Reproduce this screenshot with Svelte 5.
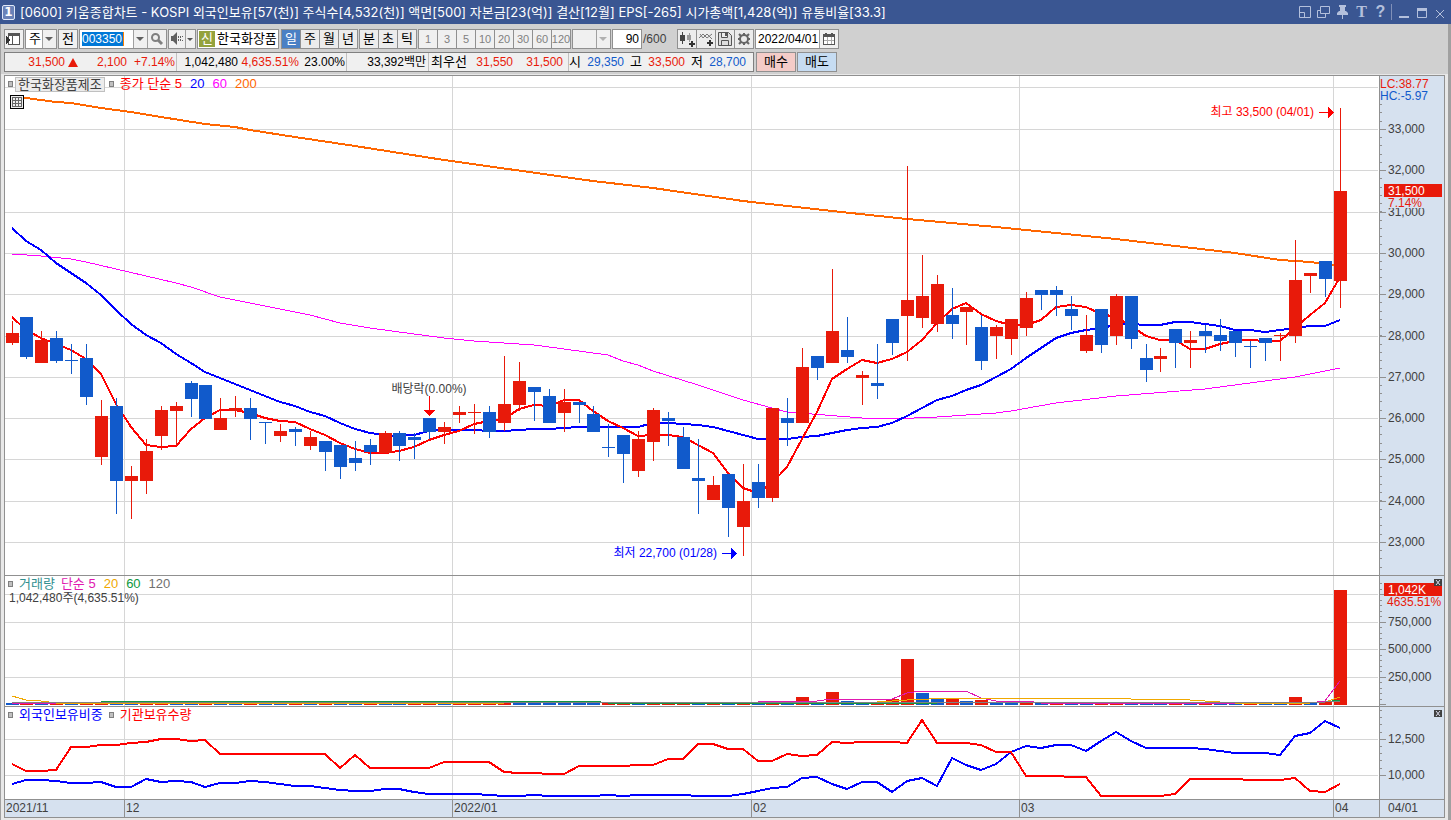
<script lang="ts">
  type Candle = [tone: 'r' | 'b', high: number, top: number, bottom: number, low: number];
  type Point = [index: number, y: number];

  // all panels share one vertical scale, each svg shows its own slice of it
  const candles: Candle[] = [
    ['r', 321, 333, 343, 345], ['b', 317, 317, 357, 359], ['r', 331, 340, 363, 363], ['b', 331, 338, 361, 363],
    ['b', 344, 360, 361, 374], ['b', 344, 358, 397, 405], ['r', 400, 416, 457, 465], ['b', 398, 406, 481, 514],
    ['r', 466, 476, 481, 519], ['r', 439, 451, 481, 494], ['r', 406, 410, 436, 450], ['r', 402, 406, 411, 446],
    ['b', 381, 383, 399, 417], ['b', 385, 385, 419, 419], ['r', 398, 418, 430, 430], ['r', 396, 408, 411, 417],
    ['b', 398, 408, 419, 440], ['b', 422, 422, 423, 444], ['r', 424, 431, 436, 442], ['b', 427, 429, 432, 446],
    ['r', 431, 437, 446, 450], ['b', 441, 441, 452, 471], ['b', 445, 445, 467, 479], ['b', 441, 458, 463, 471],
    ['b', 439, 445, 452, 465], ['r', 431, 433, 453, 453], ['b', 431, 433, 446, 461], ['b', 433, 437, 440, 459],
    ['b', 418, 418, 432, 439], ['r', 422, 427, 432, 444], ['r', 406, 412, 415, 423], ['r', 404, 412, 413, 434],
    ['b', 406, 412, 432, 438], ['r', 356, 404, 423, 431], ['r', 362, 381, 405, 411], ['b', 387, 387, 392, 421],
    ['b', 389, 396, 423, 423], ['r', 389, 402, 413, 432], ['b', 402, 402, 405, 423], ['b', 406, 414, 432, 432],
    ['b', 424, 447, 448, 457], ['b', 435, 435, 454, 483], ['r', 431, 439, 471, 477], ['r', 408, 410, 442, 461],
    ['b', 412, 418, 421, 446], ['b', 427, 437, 469, 469], ['b', 439, 478, 481, 514], ['r', 476, 485, 500, 500],
    ['b', 474, 474, 508, 537], ['r', 464, 501, 527, 556], ['b', 464, 482, 498, 508], ['r', 408, 408, 498, 502],
    ['b', 398, 418, 423, 446], ['r', 348, 367, 423, 423], ['b', 356, 356, 368, 380], ['r', 269, 331, 363, 363],
    ['b', 317, 350, 357, 363], ['r', 371, 375, 378, 405], ['b', 344, 383, 386, 399], ['b', 319, 319, 343, 355],
    ['r', 166, 300, 316, 361], ['r', 255, 296, 318, 328], ['r', 275, 284, 324, 332], ['b', 288, 315, 324, 339],
    ['r', 307, 307, 312, 345], ['b', 315, 327, 361, 370], ['r', 325, 327, 336, 359], ['r', 319, 319, 339, 355],
    ['r', 292, 298, 328, 336], ['b', 290, 290, 295, 310], ['b', 286, 290, 295, 316], ['b', 296, 309, 316, 330],
    ['r', 315, 335, 351, 353], ['b', 309, 309, 345, 353], ['r', 294, 296, 336, 345], ['b', 296, 296, 339, 349],
    ['b', 344, 358, 370, 382], ['r', 348, 356, 359, 372], ['b', 329, 329, 343, 368], ['r', 331, 340, 343, 368],
    ['b', 325, 331, 336, 353], ['b', 319, 335, 341, 351], ['b', 331, 331, 343, 357], ['b', 341, 346, 347, 368],
    ['b', 338, 338, 343, 361], ['r', 333, 335, 336, 361], ['r', 240, 280, 336, 343], ['r', 273, 273, 276, 293],
    ['b', 261, 261, 279, 297], ['r', 108, 191, 281, 308]
  ];

  const ma5 = [
    317, 330, 338, 344, 350, 359, 374, 404, 427, 445, 447, 446, 429, 418, 410, 410, 413, 418, 421, 422,
    429, 435, 443, 449, 453, 453, 451, 447, 440, 435, 431, 424, 421, 419, 409, 405, 406, 400, 400, 411,
    421, 428, 436, 435, 435, 437, 445, 453, 473, 488, 493, 483, 467, 439, 412, 379, 369, 360, 363, 359,
    352, 340, 323, 309, 303, 314, 321, 325, 325, 320, 307, 305, 307, 314, 317, 326, 336, 340, 340, 349,
    349, 344, 341, 340, 341, 341, 328, 315, 303, 277
  ];
  const ma20 = [
    228, 241, 250, 263, 273, 283, 295, 310, 324, 335, 343, 354, 363, 372, 378, 384, 390, 396, 402, 406,
    412, 416, 423, 429, 433, 435, 436, 435, 431, 430, 430, 430, 431, 431, 430, 429, 429, 428, 427, 427,
    427, 427, 427, 423, 423, 424, 425, 427, 431, 435, 439, 439, 439, 437, 436, 433, 430, 428, 427, 423,
    416, 408, 400, 396, 390, 385, 377, 369, 358, 348, 338, 333, 330, 328, 325, 324, 325, 325, 322, 322,
    324, 326, 330, 330, 332, 330, 328, 326, 326, 320
  ];
  const ma60: Point[] = [
    [0, 254], [2, 256], [4, 259], [5, 262], [7, 269], [9, 276], [11, 283], [12, 287], [14, 297], [18, 309],
    [20, 315], [22, 323], [24, 328], [26, 332], [29, 338], [31, 341], [35, 345], [37, 349], [40, 355], [41, 361],
    [42, 365], [43, 371], [46, 385], [49, 400], [51, 408], [52, 412], [57, 418], [59, 419], [62, 417], [66, 413],
    [67, 411], [70, 403], [74, 396], [80, 389], [86, 377], [89, 368]
  ];
  const ma200: Point[] = [
    [0, 97], [1, 98], [3, 102], [4, 103], [6, 108], [8, 112], [10, 117], [13, 124], [15, 127], [16, 130],
    [19, 137], [23, 146], [29, 160], [39, 181], [43, 188], [49, 201], [55, 211], [60, 219], [66, 227],
    [74, 239], [82, 253], [85, 260], [87, 262], [89, 266]
  ];

  const volumeTones =
    'brbrbrrbbrrbbrbbrbbrbrbbrbbrrbrrrrbbbbbbrrbrrrbrbrbrbrbrbbrrrbbrbrbbrbrbbrrbbbrbrbbrbbrbrr';
  const volumeTops: Record<number, number> = {
    1: 702, 7: 702, 8: 702, 51: 701, 53: 697, 55: 692, 56: 701, 59: 699, 60: 659, 61: 693, 62: 698,
    63: 698, 64: 701, 65: 700, 66: 702, 67: 702, 68: 702, 86: 697, 88: 702, 89: 590
  };
  const volumeLines: { name: string; points: Point[] }[] = [
    { name: 'vol5', points: [[0, 703], [6, 703], [7, 702], [50, 702], [52, 701], [54, 701], [55, 699], [57, 699], [58, 700], [59, 699], [60, 693], [61, 691], [64, 691], [65, 698], [66, 701], [68, 701], [69, 703], [87, 703], [88, 701], [89, 681]] },
    { name: 'vol20', points: [[0, 696], [1, 700], [2, 701], [3, 703], [33, 703], [34, 702], [58, 702], [60, 700], [63, 698], [74, 698], [75, 699], [78, 699], [80, 701], [82, 703], [87, 703], [88, 702], [89, 697]] },
    { name: 'vol60', points: [[6, 702], [7, 701], [39, 701], [40, 703], [62, 703], [63, 702], [88, 702], [89, 700]] },
    { name: 'vol120', points: [[0, 702], [88, 702], [89, 701]] }
  ];

  const institution = [
    764, 771, 771, 770, 747, 747, 745, 745, 743, 742, 739, 739, 741, 740, 754, 754, 754, 754, 754, 754,
    754, 754, 768, 755, 768, 768, 768, 768, 768, 762, 762, 762, 762, 772, 773, 773, 774, 774, 766, 766,
    766, 766, 765, 765, 759, 759, 744, 744, 749, 749, 761, 761, 754, 756, 755, 742, 743, 742, 742, 742,
    743, 720, 743, 743, 743, 745, 752, 752, 776, 776, 776, 777, 777, 796, 796, 796, 796, 796, 794, 779,
    779, 779, 779, 780, 780, 780, 778, 791, 792, 784
  ];
  const foreign = [
    784, 780, 780, 781, 783, 783, 782, 787, 787, 779, 782, 781, 782, 787, 783, 783, 781, 782, 784, 786,
    786, 788, 790, 791, 791, 789, 789, 792, 794, 794, 794, 794, 795, 796, 796, 795, 796, 796, 796, 796,
    795, 796, 795, 795, 795, 795, 796, 796, 796, 794, 791, 788, 787, 778, 777, 784, 789, 782, 782, 792,
    781, 778, 786, 758, 765, 770, 764, 752, 746, 748, 745, 745, 751, 741, 732, 741, 748, 748, 748, 748,
    749, 751, 753, 753, 753, 755, 736, 733, 721, 728
  ];

  const months = [
    { index: 8, label: '12' },
    { index: 30, label: '2022/01' },
    { index: 50, label: '02' },
    { index: 68, label: '03' },
    { index: 89, label: '04' }
  ];

  const priceTicks = Array.from({ length: 11 }, (_, k) => ({
    y: Math.round(129 + 41.3 * k),
    label: `${33 - k},000`
  }));
  const priceMinor = Array.from({ length: 57 }, (_, k) => Math.round(104 + 8.26 * k));
  const volumeTicks = [
    { y: 594, label: '' },
    { y: 622, label: '750,000' },
    { y: 649, label: '500,000' },
    { y: 677, label: '250,000' },
    { y: 704, label: '' }
  ];
  const volumeMinor = Array.from({ length: 23 }, (_, k) => Math.round(583 + 5.5 * k));
  const holdTicks = [
    { y: 739, label: '12,500' },
    { y: 775, label: '10,000' }
  ];
  const holdMinor = Array.from({ length: 9 }, (_, k) => Math.round(710 + 7.2 * k));

  const periods = ['일', '주', '월', '년'];
  const units = ['분', '초', '틱'];
  const intervals = ['1', '3', '5', '10', '20', '30', '60', '120'];

  let plotWidth = $state(1374);
  let period = $state('일');
  let count = $state('90');
  let date = $state('2022/04/01');
  let code = $state('003350');

  const step = $derived((plotWidth - 46) / (candles.length - 1));
  const xs = $derived(candles.map((_, i) => Math.floor(7.01 + step * i)));

  function line(points: Point[]) {
    return points.map(([i, y]) => `${xs[i]},${y}`).join(' ');
  }

  function dense(values: number[]) {
    return line(values.map((y, i): Point => [i, y]));
  }
</script>

{#snippet arrow()}
  <svg class="arrow" width="14" height="18" viewBox="0 0 14 18" aria-hidden="true">
    <path d="M0 0h1v18H0z" fill="#a0a0a0" />
    <path d="M3 7h8L7 11z" fill="currentColor" />
  </svg>
{/snippet}

{#snippet grid(lines: number[], top: number, height: number)}
  {#each lines as y}
    <rect x="0" {y} width={plotWidth - 1} height="1" class="grid" />
  {/each}
  {#each months as month}
    <rect x={xs[month.index] - 7} y={top} width="1" {height} class="grid" />
  {/each}
{/snippet}

{#snippet ticks(major: { y: number; label: string }[], minor: number[])}
  {#each minor as y}
    <rect x="0" {y} width="2" height="1" class="tick" />
  {/each}
  {#each major as tick}
    <rect x="0" y={tick.y} width="6" height="1" class="tick" />
    <text x="8" y={tick.y + 4}>{tick.label}</text>
  {/each}
{/snippet}

{#snippet close()}
  <button class="close" aria-label="닫기">
    <svg width="8" height="7" viewBox="0 0 8 7" aria-hidden="true">
      <path d="M2 1l4 5M6 1L2 6" stroke="#dde" fill="none" />
    </svg>
  </button>
{/snippet}

<header class="title">
  <span class="title__badge">1</span>
  <h1>[0600] 키움종합차트 - KOSPI 외국인보유[57(천)] 주식수[4,532(천)] 액면[500] 자본금[23(억)] 결산[12월] EPS[-265] 시가총액[1,428(억)] 유통비율[33.3]</h1>
  <div class="title__tools">
    <button aria-label="화면 축소">
      <svg width="12" height="12" viewBox="0 0 12 12"><path d="M.5 .5h11v11H.5zM.5 6.5h5v5" /></svg>
    </button>
    <button aria-label="창 복제">
      <svg width="13" height="12" viewBox="0 0 13 12"><path d="M3.500 .5h9v7h-9zM3 4.500H.5v7h8V8" /></svg>
    </button>
    <button aria-label="고정">
      <svg width="11" height="14" viewBox="0 0 11 14"><path class="solid" d="M2 0h7v2H8v4h1l2 2v2H6v4H5v-4H0V8l2-2h1V2H2z" /></svg>
    </button>
    <button class="glyph">T</button>
    <button class="glyph glyph--sans">?</button>
  </div>
  <div class="title__tools title__tools--window">
    <button aria-label="최소화">
      <svg width="10" height="12" viewBox="0 0 10 12"><path class="solid" d="M0 10h10v2H0z" /></svg>
    </button>
    <button aria-label="최대화">
      <svg width="10" height="12" viewBox="0 0 10 12"><path d="M.5 2.500h9v9h-9z" /><path class="solid" d="M0 2h10v3H0z" /></svg>
    </button>
    <button aria-label="창 닫기">
      <svg width="8" height="12" viewBox="0 0 8 12"><path d="M0 4l8 8M8 4l-8 8" /></svg>
    </button>
  </div>
</header>

<main class="window">
  <div class="toolbar">
    <div class="row">
      <button class="box icon" aria-label="패널 열기">
        <svg width="16" height="14" viewBox="0 0 16 14" shape-rendering="crispEdges">
          <path d="M2.500 1.500h11v11h-11z" fill="#fff" stroke="#555" />
          <path d="M6.500 4v9" stroke="#555" />
          <path d="M2 1h12v3H2z" fill="#555" />
          <path d="M0 4l5 4-5 4z" fill="#333" />
        </svg>
      </button>
      <div class="box select select--market">
        <select aria-label="종목 구분"><option>주</option></select>
        {@render arrow()}
      </div>
      <button class="box prev">전</button>
      <div class="box code">
        <input bind:value={code} aria-label="종목코드" />
        <button class="bare" aria-label="종목 목록">{@render arrow()}</button>
        <button class="icon icon--split" aria-label="종목 검색">
          <svg width="12" height="12" viewBox="0 0 12 12" fill="none" stroke="#808080">
            <circle cx="4.500" cy="4.500" r="3.500" stroke-width="2" /><path d="M7 7l4 4" stroke-width="3" />
          </svg>
        </button>
      </div>
      <div class="box sound">
        <button class="icon" aria-label="소리">
          <svg width="14" height="14" viewBox="0 0 14 14" fill="#606060">
            <path d="M1 4h2l4-4v13L3 9H1z" /><path d="M8 4h1v2H8zM10 4h1v2h-1zM8 7h1v2H8zM10 7h1v2h-1zM12 4h1v1h-1zM12 8h1v1h-1z" />
          </svg>
        </button>
        <button class="bare bare--small" aria-label="소리 설정">
          <svg width="10" height="18" viewBox="0 0 10 18"><path d="M0 0h1v18H0z" fill="#a0a0a0" /><path d="M2 8h6L5 11z" fill="#555" /></svg>
        </button>
      </div>
      <div class="box stock"><span class="stock__badge">신</span><span class="stock__name">한국화장품</span></div>
      <div class="segment segment--first">
        {#each periods as item}
          <button class:active={period === item} onclick={() => (period = item)}>{item}</button>
        {/each}
      </div>
      <div class="segment">
        {#each units as item}
          <button>{item}</button>
        {/each}
      </div>
      <div class="segment segment--muted">
        {#each intervals as item}
          <button disabled>{item}</button>
        {/each}
      </div>
      <div class="box select select--empty">
        <select aria-label="간격" disabled><option></option></select>
        {@render arrow()}
      </div>
      <label class="count"><input class="box" bind:value={count} /><span>/600</span></label>
      <div class="segment segment--icons">
        <button aria-label="차트 추가">
          <svg width="16" height="15" viewBox="0 0 16 15" shape-rendering="crispEdges">
            <path d="M1 3h5v6H1zM3 0h1v12H3z" fill="#444" /><path d="M8 3h4v5H8zM10 1h1v9h-1z" fill="#999" />
            <path d="M12 9h2v2h2v2h-2v2h-2v-2h-2v-2h2z" fill="#333" />
          </svg>
        </button>
        <button aria-label="지표 추가">
          <svg width="16" height="15" viewBox="0 0 16 15">
            <path d="M1 6l4-4 4 4 5-4M2 2l3 4 4-4 5 5" fill="none" stroke="#777" />
            <path d="M11 8h2v2h2v2h-2v2h-2v-2H9v-2h2z" fill="#333" />
          </svg>
        </button>
        <button aria-label="저장">
          <svg width="14" height="14" viewBox="0 0 14 14" fill="#ddd" stroke="#555">
            <path d="M.5 .5h10l3 3v10H.5zM3.500 .5v5h6v-5M3.500 13.500v-5h7v5" /><path d="M8 1v3" stroke-width="2" />
          </svg>
        </button>
        <button aria-label="설정">
          <svg width="14" height="14" viewBox="0 0 14 14" fill="none" stroke="#666">
            <circle cx="7" cy="7" r="4" stroke-width="2" />
            <path d="M7 1v2M7 11v2M1 7h2M11 7h2M2 2l2 2M10 10l2 2M12 2l-2 2M4 10l-2 2" stroke-width="2" />
          </svg>
        </button>
      </div>
      <div class="box date">
        <input bind:value={date} aria-label="기준일" />
        <button class="icon icon--split" aria-label="달력">
          <svg width="12" height="12" viewBox="0 0 12 12" shape-rendering="crispEdges">
            <path d="M0 1h12v11H0z" fill="#555" /><path d="M1 4h10v7H1z" fill="#fff" />
            <path d="M4 4v7M8 4v7M1 7.500h10" stroke="#aaa" /><path d="M2 0h2v2H2zM8 0h2v2H8z" fill="#555" />
          </svg>
        </button>
      </div>
    </div>

    <div class="row">
      <div class="quote">
        <div class="quote__cell quote__cell--change">
          <span class="up">31,500</span><span class="triangle"></span><span class="up">2,100</span><span class="up">+7.14%</span>
        </div>
        <div class="quote__cell quote__cell--volume">
          <span>1,042,480</span><span class="up">4,635.51%</span><span>23.00%</span>
        </div>
        <div class="quote__cell quote__cell--amount"><span>33,392백만</span></div>
        <div class="quote__cell quote__cell--best">
          <span class="name">최우선</span><span class="up">31,550</span><span class="up">31,500</span>
        </div>
        <div class="quote__cell quote__cell--range">
          <span class="name">시</span><span class="down">29,350</span>
          <span class="name">고</span><span class="up">33,500</span>
          <span class="name">저</span><span class="down">28,700</span>
        </div>
      </div>
      <button class="trade trade--buy">매수</button>
      <button class="trade trade--sell">매도</button>
    </div>
  </div>

  <div class="chart">
    <section class="panel">
      <div class="plot" bind:clientWidth={plotWidth}>
        <svg width="100%" height="499" viewBox="0 76 {plotWidth} 499" shape-rendering="crispEdges">
          {@render grid([87, ...priceTicks.map((t) => t.y)], 76, 499)}
          <polyline class="line ma200" points={line(ma200)} />
          <polyline class="line ma60" points={line(ma60)} />
          <polyline class="line ma20" points={dense(ma20)} />
          <polyline class="line ma5" points={dense(ma5)} />
          {#each candles as [tone, high, top, bottom, low], i}
            <g class={tone}>
              <rect x={xs[i]} y={high} width="1" height={low - high} />
              <rect x={xs[i] - 6} y={top} width="13" height={bottom - top} />
            </g>
          {/each}
          <g class="note note--high">
            <text x={xs[89] - 26} y="116" text-anchor="end">최고 33,500 (04/01)</text>
            <path d="M{xs[89] - 21} 112h9v-5l6 5.500-6 5.500v-5h-9z" />
          </g>
          <g class="note note--low">
            <text x={xs[49] - 26} y="557" text-anchor="end">최저 22,700 (01/28)</text>
            <path d="M{xs[49] - 21} 553h9v-5l6 5.500-6 5.500v-5h-9z" />
          </g>
          <g class="note note--event">
            <text x={xs[28]} y="393" text-anchor="middle">배당락(0.00%)</text>
            <path d="M{xs[28]} 396h1v14h5l-5.500 6-5.500-6h5z" />
          </g>
        </svg>
        <div class="legend">
          <i class="handle"></i><button class="legend__name">한국화장품제조</button><i class="handle"></i>
          <span class="legend__main c-red">종가 단순 5</span><span class="c-blue">20</span><span class="c-pink">60</span><span class="c-orange">200</span>
        </div>
        <button class="sheet" aria-label="데이터 표">
          <svg width="14" height="14" viewBox="0 0 14 14" shape-rendering="crispEdges">
            <path d="M.5 .5h13v13H.5z" fill="#eee" stroke="#000" />
            <path d="M2.500 2.500h9v9h-9zM2 5.500h10M2 8.500h10M5.500 2v10M8.500 2v10" fill="none" stroke="#666" />
          </svg>
        </button>
      </div>
      <div class="axis">
        <svg width="64" height="499" viewBox="0 76 64 499" shape-rendering="crispEdges">
          {@render ticks(priceTicks, priceMinor)}
          <text x="0" y="88" class="r">LC:38.77</text>
          <text x="0" y="100" class="b">HC:-5.97</text>
          <rect x="4" y="184" width="58" height="13" class="r" />
          <text x="8" y="195" class="badge">31,500</text>
          <rect x="7" y="197" width="50" height="11" class="axis-fill" />
          <text x="8" y="207" class="r">7.14%</text>
        </svg>
      </div>
    </section>

    <section class="panel">
      <div class="plot">
        <svg width="100%" height="130" viewBox="0 576 {plotWidth} 130" shape-rendering="crispEdges">
          {@render grid([594, 622, 649, 677], 576, 130)}
          {#each volumeTones as tone, i}
            {@const top = volumeTops[i] ?? 703}
            <rect x={xs[i] - 6} y={top} width="13" height={705 - top} class={tone} />
          {/each}
          {#each volumeLines as item}
            <polyline class={`line ${item.name}`} points={line(item.points)} />
          {/each}
        </svg>
        <div class="legend">
          <i class="handle"></i><span class="legend__item c-teal">거래량</span><span class="c-magenta">단순 5</span><span class="c-yellow">20</span><span class="c-green">60</span><span class="c-gray">120</span>
        </div>
        <p class="volume">1,042,480주(4,635.51%)</p>
      </div>
      <div class="axis">
        <svg width="64" height="130" viewBox="0 576 64 130" shape-rendering="crispEdges">
          {@render ticks(volumeTicks, volumeMinor)}
          <rect x="4" y="583" width="58" height="13" class="r" />
          <text x="8" y="594" class="badge">1,042K</text>
          <text x="7" y="606" class="r">4635.51%</text>
        </svg>
        {@render close()}
      </div>
    </section>

    <section class="panel">
      <div class="plot">
        <svg width="100%" height="92" viewBox="0 707 {plotWidth} 92" shape-rendering="crispEdges">
          {@render grid([739, 775], 707, 92)}
          <polyline class="line ma20" points={dense(foreign)} />
          <polyline class="line ma5" points={dense(institution)} />
        </svg>
        <div class="legend">
          <i class="handle"></i><span class="legend__item c-blue">외국인보유비중</span><i class="handle"></i><span class="legend__main c-red">기관보유수량</span>
        </div>
      </div>
      <div class="axis">
        <svg width="64" height="92" viewBox="0 707 64 92" shape-rendering="crispEdges">
          {@render ticks(holdTicks, holdMinor)}
        </svg>
        {@render close()}
      </div>
    </section>

    <section class="panel panel--time">
      <div class="plot">
        <svg width="100%" height="17" viewBox="0 0 {plotWidth} 17" shape-rendering="crispEdges">
          <text x="1" y="12">2021/11</text>
          {#each months as month}
            <rect x={xs[month.index] - 7} y="0" width="1" height="17" class="tick" />
            <text x={xs[month.index] - 5} y="12">{month.label}</text>
          {/each}
        </svg>
      </div>
      <div class="axis">
        <svg width="64" height="17" viewBox="0 0 64 17"><text x="8" y="12">04/01</text></svg>
      </div>
    </section>
  </div>
</main>

<style>
  :global(body) {
    background: #f0f0f0;
    color: #000;
    font: 12px/16px 'Liberation Sans', 'Noto Sans CJK KR', sans-serif;
  }

  svg {
    display: block;
    overflow: visible;
  }

  button,
  input,
  select {
    box-sizing: border-box;
    margin: 0;
    padding: 0;
    border: 0;
    border-radius: 0;
    background: none;
    color: inherit;
    font: inherit;
  }

  button,
  select {
    font-size: 13px;
  }

  .title {
    display: flex;
    align-items: center;
    height: 24px;
    padding: 0 2px;
    background: #3a5692;
    color: #fff;
  }

  .title__badge {
    width: 11px;
    height: 13px;
    border: 1px solid #e0e8f8;
    border-radius: 2px;
    background: #6a82b8;
    font: bold 12px/13px 'DejaVu Sans', sans-serif;
    text-align: center;
  }

  .title h1 {
    flex: 1;
    margin: 0 0 0 5px;
    font: 13px/22px Inter, 'Noto Sans CJK KR', sans-serif;
    white-space: nowrap;
  }

  .title__tools {
    display: flex;
    align-items: center;
    color: #b4c0dc;
  }

  .title__tools button {
    display: flex;
    align-items: center;
    justify-content: center;
    width: 19px;
    height: 16px;
  }

  .title__tools path {
    fill: none;
    stroke: currentColor;
  }

  .title__tools .solid {
    fill: currentColor;
    stroke: none;
  }

  .title__tools .glyph {
    font: bold 16px/16px 'Liberation Serif', serif;
  }

  .title__tools .glyph--sans {
    font-family: 'Liberation Sans', sans-serif;
  }

  .title__tools--window {
    margin-left: 1px;
    padding-left: 3px;
    border-left: 1px solid #8090b8;
  }

  .title__tools--window button {
    width: 18px;
  }

  .window {
    padding-bottom: 2px;
    border-left: 1px solid #a0a0a0;
    border-right: 3px solid #a0a0a0;
    background: #e8e8e8;
  }

  .toolbar {
    display: grid;
    gap: 3px;
    margin-bottom: 1px;
    padding: 5px 3px 2px;
    background: #d0d0d0;
  }

  .row {
    display: flex;
    gap: 1px;
    height: 20px;
    white-space: nowrap;
  }

  .box {
    box-sizing: border-box;
    flex: none;
    height: 20px;
    border: 1px solid #909090;
    background: #f0f0f0;
  }

  .icon {
    display: flex;
    align-items: center;
    justify-content: center;
    width: 20px;
  }

  .icon--split {
    width: 19px;
    height: 18px;
    border-left: 1px solid #a0a0a0;
    background: #f0f0f0;
  }

  .arrow {
    color: #606060;
    background: #f0f0f0;
    pointer-events: none;
  }

  .select {
    display: grid;
    background: #fff;
  }

  .select select {
    grid-area: 1 / 1;
    width: 100%;
    height: 18px;
    padding-left: 3px;
    appearance: none;
    line-height: 18px;
  }

  .select .arrow {
    grid-area: 1 / 1;
    justify-self: end;
  }

  .select--market {
    width: 32px;
  }

  .select--empty {
    width: 39px;
    background: #f0f0f0;
  }

  .select--empty .arrow {
    color: #b0b0b0;
  }

  .prev {
    width: 20px;
  }

  .code {
    display: flex;
    width: 88px;
    background: #fff;
  }

  .code input {
    width: 42px;
    height: 14px;
    margin: 2px 9px 2px 2px;
    border-right: 1px solid #ff8000;
    background: #0078d7;
    color: #fff;
    line-height: 14px;
  }

  .bare {
    flex: none;
    width: 14px;
  }

  .bare--small {
    width: 10px;
  }

  .sound {
    display: flex;
    width: 28px;
  }

  .sound .icon {
    width: 16px;
  }

  .stock {
    display: flex;
    align-items: center;
    gap: 2px;
    width: 82px;
    padding: 1px;
    background: #fff;
    font-size: 13px;
  }

  .stock__badge {
    width: 16px;
    height: 16px;
    background: #94a23c;
    color: #fff;
    text-align: center;
  }

  .segment {
    box-sizing: border-box;
    display: flex;
    flex: none;
    height: 20px;
    border: 1px solid #909090;
    background: #ececec;
  }

  .segment--first {
    margin-left: 1px;
  }

  .segment button {
    display: flex;
    align-items: center;
    justify-content: center;
    width: 19px;
    border-left: 1px solid #909090;
  }

  .segment button:first-child {
    width: 18px;
    border-left: 0;
  }

  .segment .active {
    background: #4a80c4;
    color: #fff;
  }

  .segment--muted {
    background: #f0f0f0;
    color: #808080;
  }

  .segment--muted button {
    font-size: 11px;
  }

  .segment--icons {
    margin-left: 10px;
  }

  .count {
    display: flex;
    width: 54px;
    line-height: 20px;
  }

  .count input {
    width: 30px;
    padding-right: 2px;
    background: #fff;
    text-align: right;
  }

  .count span {
    margin-left: 1px;
    color: #404040;
  }

  .date {
    display: flex;
    width: 84px;
    background: #fff;
  }

  .date input {
    width: 63px;
    padding-left: 2px;
  }

  .quote {
    box-sizing: border-box;
    display: flex;
    width: 750px;
    border: 1px solid #808080;
    background: #f0f0f0;
    line-height: 18px;
    text-align: right;
  }

  .quote__cell {
    box-sizing: border-box;
    display: grid;
    align-items: center;
    border-right: 1px solid #c0c0c0;
  }

  .quote__cell:last-child {
    flex: 1;
    border: 0;
  }

  .quote__cell--change {
    grid-template-columns: 60px 13px 49px 48px;
    width: 172px;
  }

  .quote__cell--volume {
    grid-template-columns: 61px 61px 46px;
    width: 170px;
  }

  .quote__cell--amount {
    width: 82px;
    padding-right: 2px;
  }

  .quote__cell--best {
    grid-template-columns: 38px 46px 50px;
    width: 140px;
  }

  .quote__cell--range {
    grid-template-columns: 12px 43px 18px 43px 18px 43px;
  }

  .name {
    font-size: 13px;
  }

  .triangle {
    justify-self: end;
    border: 5px solid transparent;
    border-top: 0;
    border-bottom: 9px solid #e81a0a;
  }

  .up {
    color: #e81a0a;
  }

  .down {
    color: #115acb;
  }

  .trade {
    width: 40px;
    border: 1px solid #909090;
  }

  .trade--buy {
    margin-left: 1px;
    background: #f4ccc8;
  }

  .trade--sell {
    background: #c6dcf2;
  }

  .chart {
    margin: 0 3px;
    border: 1px solid #909090;
    background: #fff;
    color: #404040;
  }

  .panel {
    display: flex;
    border-bottom: 1px solid #909090;
  }

  .panel--time {
    border: 0;
    background: #d6e1ef;
  }

  .plot {
    position: relative;
    flex: 1;
    min-width: 0;
  }

  .axis {
    position: relative;
    flex: none;
    width: 64px;
    border-left: 1px solid #909090;
    background: #d6e1ef;
  }

  .close {
    position: absolute;
    top: 3px;
    right: 2px;
    background: #404040;
  }

  .axis-fill {
    fill: #d6e1ef;
  }

  .grid {
    fill: #d6d6d6;
  }

  .tick {
    fill: #909090;
  }

  text {
    fill: #404040;
  }

  .badge {
    fill: #fff;
  }

  .r {
    fill: #e81a0a;
  }

  .b {
    fill: #115acb;
  }

  .line {
    fill: none;
    stroke-width: 2;
  }

  .ma5 {
    stroke: #f00;
  }

  .ma20 {
    stroke: #00f;
  }

  .ma60 {
    stroke: #f0f;
    stroke-width: 1;
  }

  .ma200 {
    stroke: #f60;
  }

  .vol5 {
    stroke: #e018b0;
    stroke-width: 1;
  }

  .vol20 {
    stroke: #f0a800;
    stroke-width: 1;
  }

  .vol60 {
    stroke: #109840;
    stroke-width: 1;
  }

  .vol120 {
    stroke: #808080;
    stroke-width: 1;
  }

  .note--high,
  .note--event path,
  .note--high text {
    fill: #f00;
  }

  .note--low,
  .note--low text {
    fill: #00f;
  }

  .legend {
    position: absolute;
    top: 0;
    left: 3px;
    display: flex;
    align-items: center;
    gap: 8px;
    height: 16px;
    font-size: 13px;
    white-space: nowrap;
  }

  .handle {
    box-sizing: border-box;
    width: 5px;
    height: 6px;
    border: 1px solid #808080;
    background: #c0c0c0;
  }

  .legend__name {
    height: 15px;
    margin: 0 -4px 0 -6px;
    padding: 0 2px;
    border: 1px solid #c0c0c0;
    background: #ececec;
    line-height: 13px;
  }

  .legend__item {
    margin: 0 -2px 0 -2px;
  }

  .legend__main {
    margin-left: -2px;
  }

  .sheet {
    position: absolute;
    top: 19px;
    left: 5px;
  }

  .volume {
    position: absolute;
    top: 14px;
    left: 4px;
    margin: 0;
  }

  .c-red {
    color: #f00;
  }

  .c-blue {
    color: #00f;
  }

  .c-pink {
    color: #f0f;
  }

  .c-orange {
    color: #f60;
  }

  .c-teal {
    color: #309090;
  }

  .c-magenta {
    color: #e018b0;
  }

  .c-yellow {
    color: #f0a800;
  }

  .c-green {
    color: #109840;
  }

  .c-gray {
    color: #707070;
  }
</style>
